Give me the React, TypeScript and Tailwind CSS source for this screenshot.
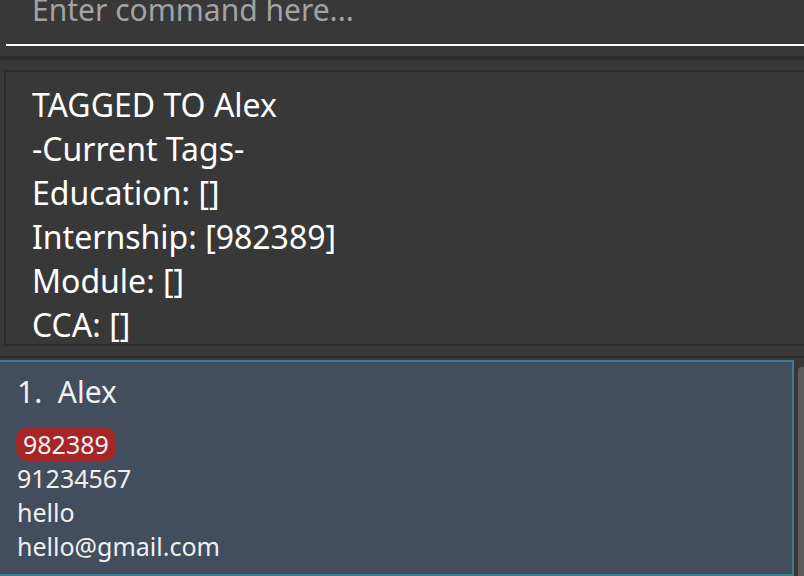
import React from 'react';

// Tag lines shown in the result display
const resultLines = [
  'TAGGED TO Alex',
  '-Current Tags-',
  'Education: []',
  'Internship: [982389]',
  'Module: []',
  'CCA: []',
];

const person = {
  index: 1,
  name: 'Alex',
  tags: ['982389'],
  phone: '91234567',
  address: 'hello',
  email: 'hello@gmail.com',
};

const App: React.FC = () => {
  return (
    <div className="w-[804px] h-[576px] overflow-hidden bg-[#383838] flex flex-col font-['Noto_Sans',sans-serif]">
      {/* command box */}
      <div className="pl-[6px] shrink-0">
        <div className="h-[46px] border-b-2 border-white overflow-hidden">
          <div className="pl-[26px] -mt-[5px] text-[30px] leading-[30px] text-[#a3a3a3] whitespace-nowrap">
            Enter command here...
          </div>
        </div>
      </div>

      <div className="h-[10px] shrink-0" />
      <div className="h-[4px] bg-[#2c2c2c] shrink-0" />
      <div className="h-[10px] shrink-0" />

      {/* result display */}
      <div className="ml-[4px] h-[276px] shrink-0 border-y-2 border-l-2 border-[#2c2c2c] overflow-hidden pl-[26px] pt-[11px]">
        {resultLines.map((line) => (
          <div key={line} className="text-[32px] leading-[44px] text-white whitespace-nowrap">
            {line}
          </div>
        ))}
      </div>

      <div className="h-[10px] shrink-0" />
      <div className="h-[2px] bg-[#2c2c2c] shrink-0" />
      <div className="h-[2px] shrink-0" />

      {/* person list */}
      <div className="flex flex-1 min-h-0">
        <div className="w-[794px] shrink-0 bg-[#424d5e] border-y-2 border-r-2 border-[#3d7b8f] pl-[17px] pt-[13px] text-[#f0f0f0]">
          <div className="text-[30px] leading-[34px] whitespace-nowrap">
            {person.index}.&nbsp; {person.name}
          </div>
          <div className="flex gap-2 mt-[18px] -ml-[1px]">
            {person.tags.map((tag) => (
              <span key={tag} className="bg-[#a52626] rounded-[12px] px-[7px] text-[25px] leading-[34px] text-[#f0f0f0]">
                {tag}
              </span>
            ))}
          </div>
          <div className="text-[25px] leading-[34px]">{person.phone}</div>
          <div className="text-[25px] leading-[34px]">{person.address}</div>
          <div className="text-[25px] leading-[34px]">{person.email}</div>
        </div>
        <div className="flex-1 pl-[4px] pt-[7px]">
          <div className="h-full bg-[#5c5c5c] rounded-tl-[4px]" />
        </div>
      </div>
    </div>
  );
};

export default App;
